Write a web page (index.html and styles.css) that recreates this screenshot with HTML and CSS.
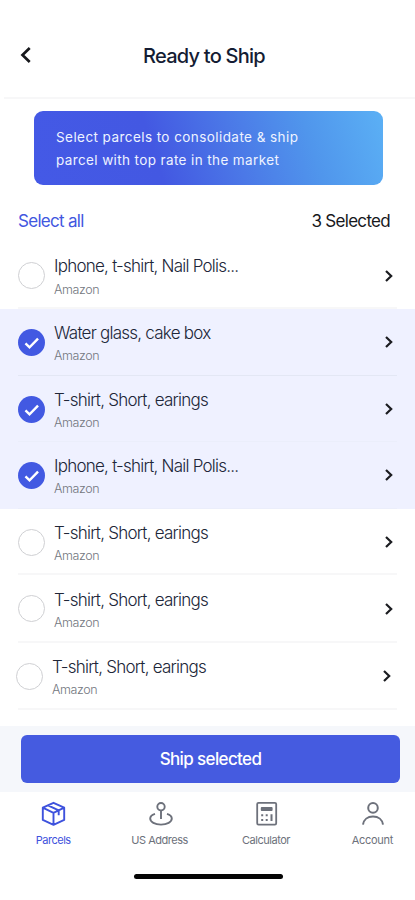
FILE: index.html
```html
<!DOCTYPE html>
<html lang="en">
<head>
<meta charset="utf-8">
<meta name="viewport" content="width=device-width">
<title>Ready to Ship</title>
<link rel="stylesheet" href="styles.css">
</head>
<body>
<svg width="0" height="0" class="defs" aria-hidden="true">
  <symbol id="chevron" viewBox="0 0 10 14"><path d="M2 2l5.2 5L2 12" fill="none" stroke="currentColor" stroke-width="2.2"/></symbol>
  <symbol id="tick" viewBox="0 0 26 26"><path d="M7.200 13.800l3.900 3.900 8.200-8.500" fill="none" stroke="#fff" stroke-width="2.3"/></symbol>
</svg>
<div class="screen">
  <header class="header">
    <svg class="back" viewBox="0 0 12 18"><path d="M9.7 2L2.5 9l7.2 7" fill="none" stroke="currentColor" stroke-width="2.7"/></svg>
    <h1 class="title">Ready to Ship</h1>
  </header>
  <section class="banner"><p class="line-a">Select parcels to consolidate &amp; ship</p><p class="line-b">parcel with top rate in the market</p></section>
  <div class="toolbar"><span class="select-all">Select all</span><span class="count">3 Selected</span></div>
  <ul class="list">
    <li class="row first"><span class="check"></span><div class="info"><p class="name">Iphone, t-shirt, Nail Polis...</p><p class="store">Amazon</p></div><svg class="chev"><use href="#chevron"/></svg></li>
    <li class="row on"><span class="check"><svg><use href="#tick"/></svg></span><div class="info"><p class="name">Water glass, cake box</p><p class="store">Amazon</p></div><svg class="chev"><use href="#chevron"/></svg></li>
    <li class="row on short faint"><span class="check"><svg><use href="#tick"/></svg></span><div class="info"><p class="name">T-shirt, Short, earings</p><p class="store">Amazon</p></div><svg class="chev"><use href="#chevron"/></svg></li>
    <li class="row on faint"><span class="check"><svg><use href="#tick"/></svg></span><div class="info"><p class="name">Iphone, t-shirt, Nail Polis...</p><p class="store">Amazon</p></div><svg class="chev"><use href="#chevron"/></svg></li>
    <li class="row short"><span class="check"></span><div class="info"><p class="name">T-shirt, Short, earings</p><p class="store">Amazon</p></div><svg class="chev"><use href="#chevron"/></svg></li>
    <li class="row tall"><span class="check"></span><div class="info"><p class="name">T-shirt, Short, earings</p><p class="store">Amazon</p></div><svg class="chev"><use href="#chevron"/></svg></li>
    <li class="row last"><span class="check"></span><div class="info"><p class="name">T-shirt, Short, earings</p><p class="store">Amazon</p></div><svg class="chev"><use href="#chevron"/></svg></li>
  </ul>
  <div class="action"><button class="ship">Ship selected</button></div>
  <nav class="tabs">
    <a class="tab active">
      <svg viewBox="0 0 26 26" stroke-width="1.9"><path d="M13.500 1.800l10.700 4.900v12.200L13.500 23.900 2.800 18.900V6.700zM2.800 6.700l10.700 5.200 10.700-5.200M13.500 11.900v12M8 4.300l10.700 5.100v4.800"/></svg>
      <span class="label">Parcels</span></a>
    <a class="tab">
      <svg viewBox="0 0 26 26" stroke-width="1.9"><circle cx="14" cy="5.700" r="3.700"/><path d="M14 9.400v8.600M8 12.800C4.700 13.800 3.200 15.600 3.200 17.600c0 3.500 4.700 6 10.800 6s10.800-2.500 10.800-6c0-2-1.500-3.800-4.800-4.800"/></svg>
      <span class="label">US Address</span></a>
    <a class="tab">
      <svg viewBox="0 0 26 26" stroke-width="1.8"><rect x="4.200" y="1.800" width="19" height="21.800" rx="1.300"/><path d="M8.700 7h10v2h-10z"/><path d="M8.200 14.300h2M12.700 14.300h2M8.200 19h2M12.700 19h2M18.500 13.300v6.700" stroke-width="2"/></svg>
      <span class="label">Calculator</span></a>
    <a class="tab">
      <svg viewBox="0 0 26 26" stroke-width="2"><circle cx="14" cy="6.900" r="4.800"/><path d="M4 23.700c.6-5.100 4.600-8.200 10-8.200s9.400 3.100 10 8.200"/></svg>
      <span class="label account">Account</span></a>
  </nav>
  <div class="home"></div>
</div>
</body>
</html>
```
FILE: styles.css
```css
* { box-sizing: border-box; margin: 0; padding: 0; }
body { background: #fff; font-family: Inter, "Liberation Sans", sans-serif; color: #202638; }
p, span { white-space: nowrap; }
.defs { display: block; height: 0; }
.screen { width: 415px; height: 900px; display: flex; flex-direction: column; overflow: hidden; }
.header { flex: none; height: 99px; margin-left: 4px; padding: 13px 0 0 16px; display: flex; align-items: center; border-bottom: 2px solid #f7f7f8; }
.back { width: 12px; height: 18px; margin-top: -1px; color: #17181c; }
.title { margin-left: 111px; padding-top: 1px; font-size: 20px; line-height: 26px; font-weight: 500; letter-spacing: -0.75px; color: #141c33; white-space: nowrap; }
.banner { flex: none; width: 349px; height: 74px; margin: 12px 0 0 34px; padding: 15px 22px 13px; border-radius: 9px; background: linear-gradient(72deg, #4459e6 0%, #4358e2 35%, #4b78e7 57%, #5096ec 78%, #5bb0f5 100%); color: #eef3ff; font-size: 13.5px; line-height: 23px; }
.line-a { letter-spacing: 0.43px; }
.line-b { letter-spacing: 0.38px; }
.toolbar { flex: none; height: 57px; padding: 24px 25px 0 18px; display: flex; justify-content: space-between; font-size: 17px; line-height: 24px; letter-spacing: -0.7px; }
.select-all { color: #4257df; }
.count { color: #17181c; }
.list { flex: none; list-style: none; height: 484px; }
.row { height: 67px; padding: 0 21px 0 18px; display: grid; grid-template-columns: 27px 1fr 10px; column-gap: 9px; align-items: start; background: linear-gradient(#f7f7f8, #f7f7f8) 18px 100% / 379px 2px no-repeat; }
.row.short { height: 66px; }
.row.tall { height: 68px; }
.row.last { padding: 0 23px 0 16px; }
.row.on { background: linear-gradient(#e3e7f4, #e3e7f4) 18px 100% / 379px 1px no-repeat #eff1ff; }
.row.faint { background: linear-gradient(#ebeefb, #ebeefb) 18px 100% / 379px 1px no-repeat #eff1ff; }
.check { width: 27px; height: 27px; margin-top: 20px; border: 1.5px solid #cfd0d3; border-radius: 50%; display: flex; }
.on .check { background: #4259e2; border: 0; }
.check svg { width: 27px; height: 27px; }
.info { padding-top: 13px; }
.name { font-size: 17px; line-height: 22px; font-weight: 300; letter-spacing: -0.76px; color: #202638; }
.store { margin-top: 4px; font-size: 12.5px; line-height: 16px; font-weight: 300; letter-spacing: -0.4px; color: #737780; }
.first .store { margin-top: 5px; }
.chev { width: 10px; height: 14px; margin-top: 27px; color: #1b1c20; }
.on .chev { margin-top: 26px; }
.short .chev { margin-top: 26px; }
.tall .info { padding-top: 14px; }
.last .chev { margin-top: 26px; }
.action { flex: none; height: 66px; padding: 9px 15px 9px 21px; background: #f5f7fb; }
.ship { display: block; width: 379px; height: 48px; border: 0; border-radius: 6px; background: #455be0; color: #fff; font: 500 17px/48px Inter, "Liberation Sans", sans-serif; letter-spacing: -0.63px; }
.tabs { flex: none; height: 68px; display: grid; grid-template-columns: repeat(4, 106.4px); justify-content: start; }
.tab { display: flex; flex-direction: column; align-items: center; padding-top: 9px; color: #6d717b; }
.tab.active { color: #3e52dd; }
.tab svg { width: 26px; height: 26px; fill: none; stroke: currentColor; stroke-linejoin: round; }
.label { margin-top: 5px; font-size: 11px; line-height: 16px; letter-spacing: -0.47px; }
.account { letter-spacing: -0.3px; }
.home { flex: none; width: 149px; height: 5px; margin: 14px 0 0 134px; border-radius: 3px; background: #050505; }
```
